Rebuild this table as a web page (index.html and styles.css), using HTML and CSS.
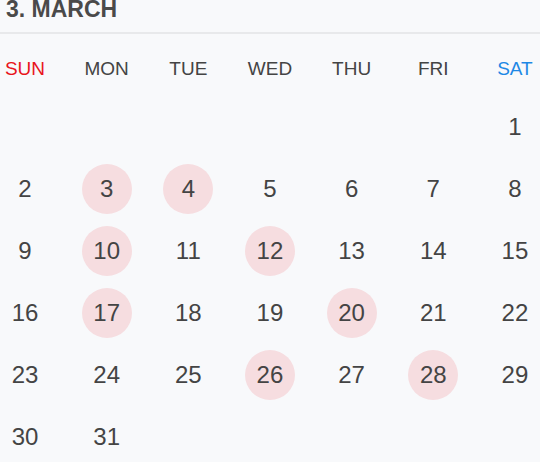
FILE: index.html
```html
<!DOCTYPE html>
<html>
<head>
<meta charset="utf-8">
<link rel="stylesheet" href="styles.css">
</head>
<body>
<div class="cal">
  <div class="title">3. MARCH</div>
  <div class="week">
    <div class="wd sun">SUN</div><div class="wd">MON</div><div class="wd">TUE</div><div class="wd">WED</div><div class="wd">THU</div><div class="wd">FRI</div><div class="wd sat">SAT</div>
  </div>
  <div class="days">
    <div class="d"></div><div class="d"></div><div class="d"></div><div class="d"></div><div class="d"></div><div class="d"></div><div class="d">1</div>
    <div class="d">2</div><div class="d hl">3</div><div class="d hl">4</div><div class="d">5</div><div class="d">6</div><div class="d">7</div><div class="d">8</div>
    <div class="d">9</div><div class="d hl">10</div><div class="d">11</div><div class="d hl">12</div><div class="d">13</div><div class="d">14</div><div class="d">15</div>
    <div class="d">16</div><div class="d hl">17</div><div class="d">18</div><div class="d">19</div><div class="d hl">20</div><div class="d">21</div><div class="d">22</div>
    <div class="d">23</div><div class="d">24</div><div class="d">25</div><div class="d hl">26</div><div class="d">27</div><div class="d hl">28</div><div class="d">29</div>
    <div class="d">30</div><div class="d">31</div><div class="d"></div><div class="d"></div><div class="d"></div><div class="d"></div><div class="d"></div>
  </div>
</div>
</body>
</html>
```
FILE: styles.css
```css
html, body {
  margin: 0;
  padding: 0;
  background: #f8f9fb;
}
body {
  font-family: "Liberation Sans", Arial, sans-serif;
  color: #444;
  width: 540px;
  height: 462px;
  overflow: hidden;
}
.title {
  height: 34px;
  line-height: 22px;
  margin-top: -2px;
  padding-left: 6px;
  font-size: 23px;
  font-weight: 700;
  color: #4a4a4a;
  border-bottom: 2px solid #e8e9eb;
  box-sizing: content-box;
}
.week {
  display: flex;
  justify-content: space-between;
  margin-top: 10px;
  height: 50px;
}
.wd {
  width: 50px;
  display: flex;
  align-items: center;
  justify-content: center;
  font-size: 19px;
  color: #444;
}
.wd.sun { color: #e8141c; }
.wd.sat { color: #1e88e5; }
.days {
  display: grid;
  grid-template-columns: repeat(7, 50px);
  justify-content: space-between;
  grid-auto-rows: 50px;
  row-gap: 12.2px;
  margin-top: 7.5px;
}
.d {
  display: flex;
  align-items: center;
  justify-content: center;
  border-radius: 50%;
  font-size: 24px;
  color: #444;
}
.d.hl { background: #f6dde0; }
```
